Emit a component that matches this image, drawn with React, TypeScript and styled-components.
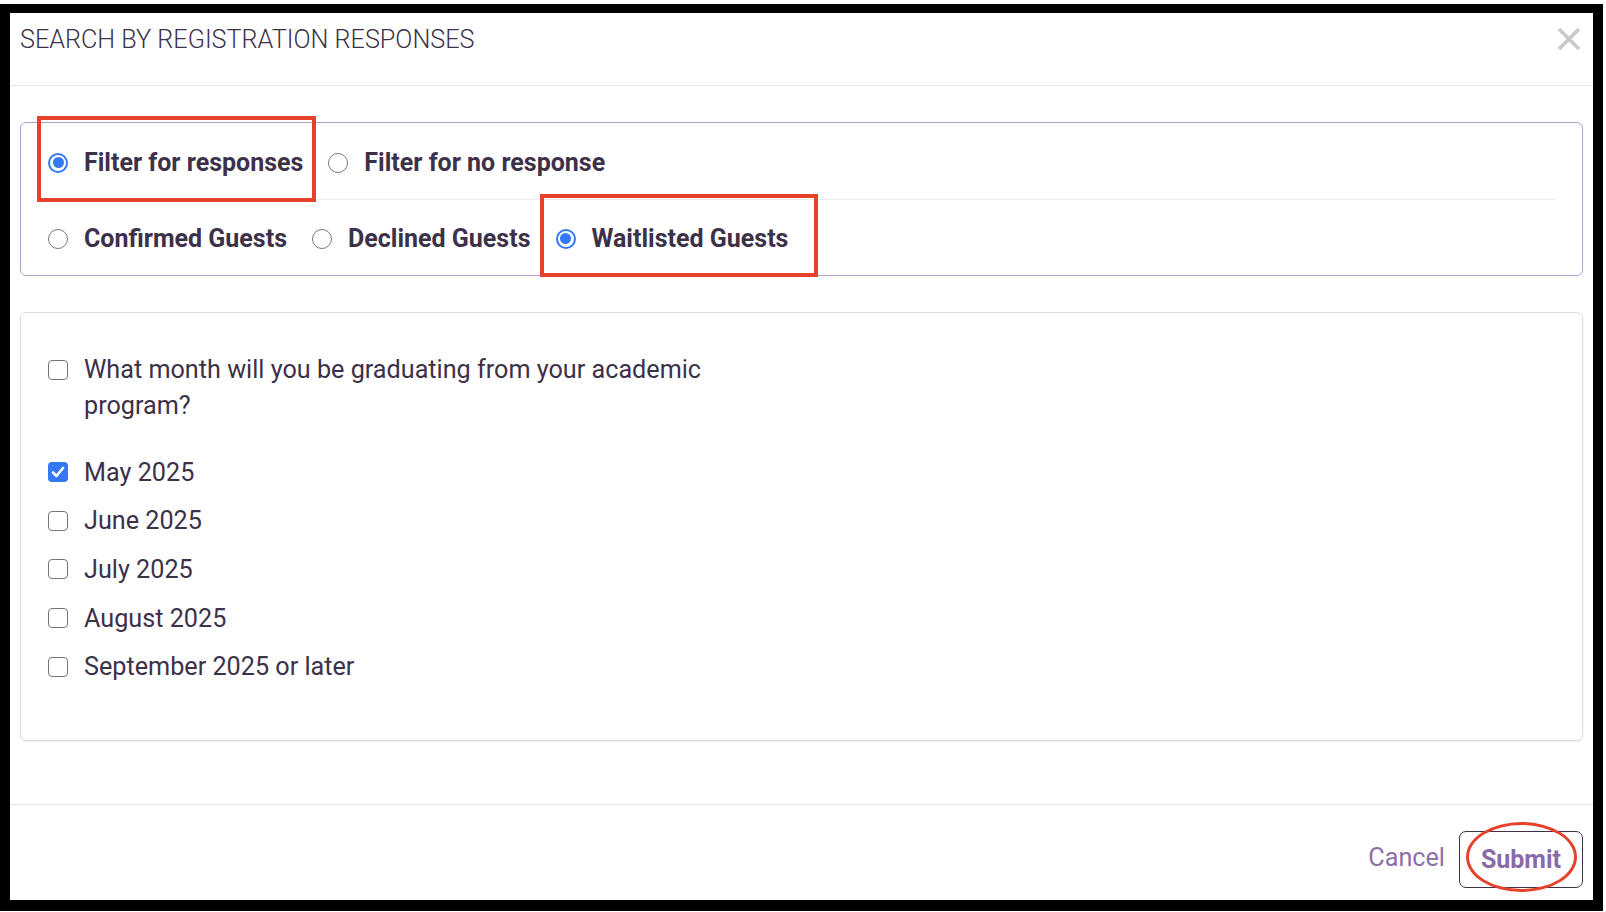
import React from "react";
import styled, { createGlobalStyle } from "styled-components";

const GlobalStyle = createGlobalStyle`
  html, body {
    margin: 0;
    padding: 0;
    background: #fff;
  }
  body {
    font-family: Roboto, "Liberation Sans", sans-serif;
    color: #3c3148;
  }
`;

const Page = styled.div`
  width: 1606px;
  height: 912px;
  padding-top: 4px;
  box-sizing: border-box;
`;

const Frame = styled.div`
  width: 1603px;
  height: 907px;
  box-sizing: border-box;
  border-style: solid;
  border-color: #000;
  border-width: 9px 10px 11px 10px;
  background: #fff;
  display: flex;
  flex-direction: column;
`;

const Header = styled.div`
  display: flex;
  justify-content: space-between;
  align-items: flex-start;
  height: 73px;
  box-sizing: border-box;
  padding: 12px 12px 0 10px;
  border-bottom: 1px solid #e6e6e6;
`;

const Title = styled.h4`
  margin: 0;
  font-size: 25.2px;
  line-height: 30px;
  font-weight: 300;
  color: #3c3148;
`;

const CloseButton = styled.button`
  margin-top: 2px;
  width: 24px;
  height: 24px;
  padding: 0;
  border: 0;
  background: none;
  cursor: pointer;
  svg { display: block; }
`;

const Body = styled.div`
  flex: 1;
  padding: 36px 10px 0 10px;
  display: flex;
  flex-direction: column;
  gap: 36px;
`;

const FilterBox = styled.div`
  border: 1px solid #b89dcd;
  border-radius: 6px;
  padding: 0 27px;
`;

const RadioRow = styled.div<{ $divider?: boolean }>`
  display: flex;
  align-items: center;
  gap: 25px;
  box-sizing: border-box;
  height: ${p => (p.$divider ? "77px" : "75px")};
  padding-top: ${p => (p.$divider ? "3px" : "2px")};
  border-bottom: ${p => (p.$divider ? "1px solid #ebebeb" : "none")};
`;

const Choice = styled.label`
  position: relative;
  display: inline-flex;
  align-items: center;
  gap: 16px;
  font-size: 25px;
  line-height: 28px;
  font-weight: 700;
  color: #3c3148;
  cursor: pointer;
`;

const RadioMark = styled.span<{ $checked?: boolean }>`
  width: 20px;
  height: 20px;
  box-sizing: border-box;
  border-radius: 50%;
  flex: none;
  border: ${p => (p.$checked ? "2px solid #3478f6" : "1.5px solid #7a7a7a")};
  background: #fff;
  display: flex;
  align-items: center;
  justify-content: center;
  &::after {
    content: "";
    width: 11px;
    height: 11px;
    border-radius: 50%;
    background: #3478f6;
    display: ${p => (p.$checked ? "block" : "none")};
  }
`;

const Highlight = styled.span<{ $l: number; $r: number; $t: number; $b: number }>`
  position: absolute;
  left: ${p => p.$l}px;
  right: ${p => p.$r}px;
  top: ${p => p.$t}px;
  bottom: ${p => p.$b}px;
  border: 4px solid #e6412b;
  pointer-events: none;
`;

const QuestionBox = styled.div`
  border: 1px solid #dedede;
  border-radius: 6px;
  box-shadow: 0 1px 2px rgba(0, 0, 0, 0.08);
  padding: 39px 27px 49px;
`;

const QuestionRow = styled.label`
  display: flex;
  align-items: flex-start;
  gap: 16px;
  font-size: 25.2px;
  line-height: 36px;
  color: #3c3148;
`;

const QuestionText = styled.span`
  max-width: 660px;
`;

const CheckMark = styled.span<{ $checked?: boolean; $top?: number }>`
  width: 20px;
  height: 20px;
  box-sizing: border-box;
  flex: none;
  margin-top: ${p => p.$top ?? 0}px;
  border-radius: 4px;
  border: ${p => (p.$checked ? "none" : "1.5px solid #767676")};
  background: ${p => (p.$checked ? "#3478f6" : "#fff")};
  display: flex;
  align-items: center;
  justify-content: center;
  svg { display: block; }
`;

const OptionList = styled.div`
  margin-top: 24px;
  display: flex;
  flex-direction: column;
`;

const Option = styled.label`
  display: flex;
  align-items: center;
  gap: 16px;
  height: 48.6px;
  font-size: 25.2px;
  color: #3c3148;
`;

const Footer = styled.div`
  height: 96px;
  box-sizing: border-box;
  border-top: 1px solid #e6e6e6;
  padding: 26px 10px 0 0;
  display: flex;
  justify-content: flex-end;
  align-items: flex-start;
  gap: 14px;
`;

const CancelButton = styled.button`
  height: 53px;
  padding: 0;
  border: 0;
  background: none;
  font-family: Roboto, "Liberation Sans", sans-serif;
  font-size: 25.2px;
  color: #8d70a8;
  cursor: pointer;
`;

const SubmitButton = styled.button`
  position: relative;
  width: 124px;
  height: 57px;
  border: 1px solid #3c3148;
  border-radius: 7px;
  background: #fff;
  font-family: Roboto, "Liberation Sans", sans-serif;
  font-size: 25px;
  font-weight: 700;
  color: #8a6aa6;
  cursor: pointer;
`;

const Ellipse = styled.span`
  position: absolute;
  left: 6px;
  right: 5px;
  top: -10px;
  bottom: -5px;
  border: 3.5px solid #e6412b;
  border-radius: 50%;
  pointer-events: none;
`;

const Check = () => (
  <svg width="14" height="12" viewBox="0 0 14 12">
    <path d="M2 6.5 L5.5 10 L12 2" fill="none" stroke="#fff" strokeWidth="2.6" strokeLinecap="round" strokeLinejoin="round" />
  </svg>
);

const months = ["May 2025", "June 2025", "July 2025", "August 2025", "September 2025 or later"];

export default function App() {
  return (
    <Page>
      <GlobalStyle />
      <Frame>
        <Header>
          <Title>SEARCH BY REGISTRATION RESPONSES</Title>
          <CloseButton aria-label="Close">
            <svg width="24" height="24" viewBox="0 0 24 24">
              <path d="M2 2 L22 22 M22 2 L2 22" stroke="#c9c9c9" strokeWidth="3.6" />
            </svg>
          </CloseButton>
        </Header>

        <Body>
          <FilterBox>
            <RadioRow $divider>
              <Choice>
                <RadioMark $checked />
                Filter for responses
                <Highlight $l={-11} $r={-13} $t={-33} $b={-25} />
              </Choice>
              <Choice>
                <RadioMark />
                Filter for no response
              </Choice>
            </RadioRow>
            <RadioRow>
              <Choice>
                <RadioMark />
                Confirmed Guests
              </Choice>
              <Choice>
                <RadioMark />
                Declined Guests
              </Choice>
              <Choice>
                <RadioMark $checked />
                Waitlisted Guests
                <Highlight $l={-16} $r={-30} $t={-31} $b={-24} />
              </Choice>
            </RadioRow>
          </FilterBox>

          <QuestionBox>
            <QuestionRow>
              <CheckMark $top={8} />
              <QuestionText>What month will you be graduating from your academic program?</QuestionText>
            </QuestionRow>
            <OptionList>
              {months.map((m, i) => (
                <Option key={m}>
                  <CheckMark $checked={i === 0}>{i === 0 && <Check />}</CheckMark>
                  {m}
                </Option>
              ))}
            </OptionList>
          </QuestionBox>
        </Body>

        <Footer>
          <CancelButton>Cancel</CancelButton>
          <SubmitButton>
            Submit
            <Ellipse />
          </SubmitButton>
        </Footer>
      </Frame>
    </Page>
  );
}
